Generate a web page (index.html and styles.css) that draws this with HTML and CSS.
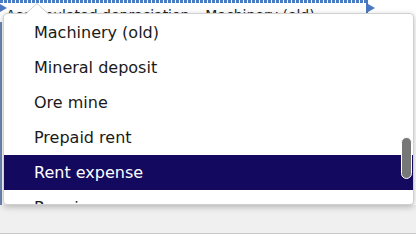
FILE: index.html
```html
<!DOCTYPE html>
<html lang="en">
<head>
  <meta charset="UTF-8" />
  <title>Account picker</title>
  <link rel="stylesheet" href="styles.css">
</head>
<body>
  <div class="app">
    <div class="toolbar">
      <div class="cell cell-main">
        <span class="tri"></span>
        <span class="label">Accumulated depreciation – Machinery (old)</span>
      </div>
      <div class="cell cell-side">
        <span class="tri"></span>
      </div>
    </div>
    <div class="content"></div>
    <div class="footer"></div>

    <!-- Account dropdown -->
    <div class="popup">
      <svg class="notch" width="24" height="12" viewBox="0 0 24 12">
        <polygon points="0,11.5 12,0.5 24,11.5" fill="#fff" />
        <polyline points="0,11.5 12,0.5 24,11.5" fill="none" stroke="#cfcfcf" stroke-width="1" />
      </svg>
      <ul class="options">
        <li>Machinery (old)</li>
        <li>Mineral deposit</li>
        <li>Ore mine</li>
        <li>Prepaid rent</li>
        <li class="active">Rent expense</li>
        <li>Repairs</li>
      </ul>
      <div class="thumb"></div>
    </div>
  </div>
</body>
</html>
```

FILE: styles.css
```css
body {
  margin: 0;
  background: #fff;
  font-family: "DejaVu Sans", Verdana, sans-serif;
  color: #1a1a1a;
}
.app {
  position: relative;
  width: 416px;
  height: 237px;
  overflow: hidden;
  display: flex;
  flex-direction: column;
}
.toolbar {
  display: flex;
  height: 22px;
  flex-shrink: 0;
}
.cell {
  display: flex;
  align-items: flex-start;
}
.cell-main {
  width: 366px;
  border-right: 2px solid #4a78c0;
  background-image: repeating-linear-gradient(90deg, #4a7cc4 0 3px, #fff 3px 4px);
  background-size: 100% 3px;
  background-repeat: no-repeat;
}
.cell-side {
  flex: 1;
}
.tri {
  margin-top: 4px;
  width: 0;
  height: 0;
  border-left: 7px solid #4a78c0;
  border-top: 4px solid transparent;
  border-bottom: 4px solid transparent;
  flex-shrink: 0;
}
.cell-main .tri {
  margin-left: 0;
}
.label {
  font-size: 14px;
  line-height: 14px;
  padding-top: 8px;
  margin-left: -1px;
  white-space: nowrap;
  color: #222;
}
.content {
  flex: 1;
  border-left: 2px solid #6c86b4;
}
.footer {
  height: 28px;
  background: #f0f0f0;
  border-bottom: 1px solid #c9c9c9;
  margin-bottom: 3px;
}

/* Dropdown */
.popup {
  position: absolute;
  left: 3px;
  top: 13px;
  width: 409px;
  height: 190px;
  background: #fff;
  border: 1px solid #d0d0d0;
  border-radius: 4px;
  box-shadow: 0 2px 6px rgba(0, 0, 0, 0.25);
}
.notch {
  position: absolute;
  left: 21px;
  top: -11px;
  display: block;
}
.options {
  list-style: none;
  margin: 0;
  padding: 1px 0 0 0;
  height: 189px;
  overflow: hidden;
  border-radius: 4px;
}
.options li {
  height: 35px;
  line-height: 35px;
  padding-left: 30px;
  font-size: 16px;
  white-space: nowrap;
}
.options li.active {
  background: #13095f;
  color: #fff;
}
.thumb {
  position: absolute;
  right: 1px;
  top: 123px;
  width: 9px;
  height: 40px;
  background: #777;
  border: 1px solid #fff;
  border-radius: 6px;
}
```
